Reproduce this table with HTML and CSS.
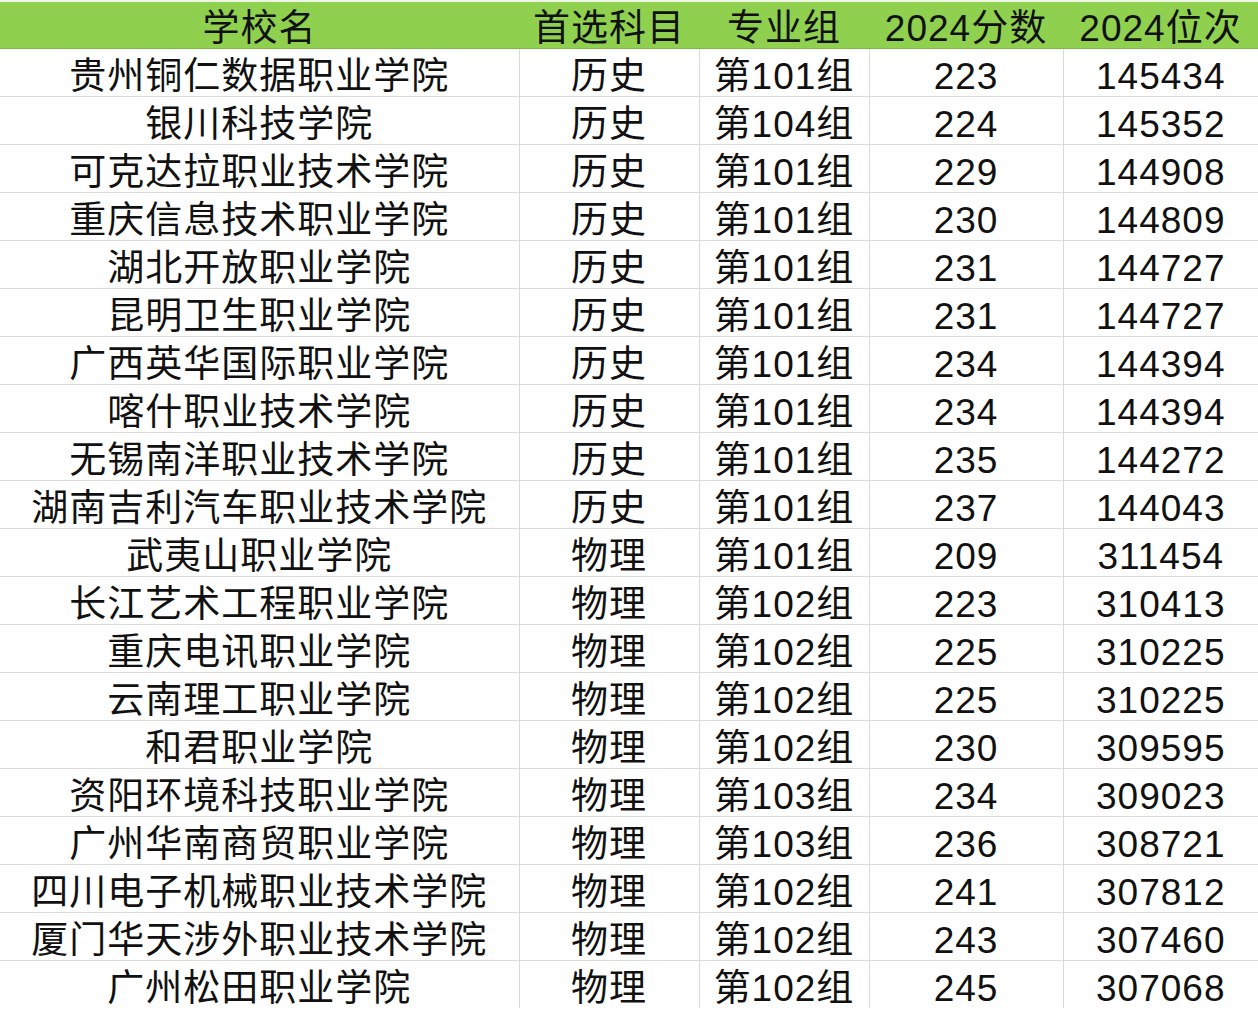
FILE: index.html
```html
<!DOCTYPE html>
<html lang="zh-CN">
<head>
<meta charset="utf-8">
<title>高职院校分数位次</title>
<link rel="stylesheet" href="styles.css">
</head>
<body>
<table class="sheet">
  <colgroup>
    <col class="c-name"><col class="c-subj"><col class="c-grp"><col class="c-score"><col class="c-rank">
  </colgroup>
  <thead>
    <tr class="head"><th>学校名</th><th>首选科目</th><th>专业组</th><th>2024分数</th><th>2024位次</th></tr>
  </thead>
  <tbody>
    <tr><td>贵州铜仁数据职业学院</td><td>历史</td><td>第101组</td><td>223</td><td>145434</td></tr>
    <tr><td>银川科技学院</td><td>历史</td><td>第104组</td><td>224</td><td>145352</td></tr>
    <tr><td>可克达拉职业技术学院</td><td>历史</td><td>第101组</td><td>229</td><td>144908</td></tr>
    <tr><td>重庆信息技术职业学院</td><td>历史</td><td>第101组</td><td>230</td><td>144809</td></tr>
    <tr><td>湖北开放职业学院</td><td>历史</td><td>第101组</td><td>231</td><td>144727</td></tr>
    <tr><td>昆明卫生职业学院</td><td>历史</td><td>第101组</td><td>231</td><td>144727</td></tr>
    <tr><td>广西英华国际职业学院</td><td>历史</td><td>第101组</td><td>234</td><td>144394</td></tr>
    <tr><td>喀什职业技术学院</td><td>历史</td><td>第101组</td><td>234</td><td>144394</td></tr>
    <tr><td>无锡南洋职业技术学院</td><td>历史</td><td>第101组</td><td>235</td><td>144272</td></tr>
    <tr><td>湖南吉利汽车职业技术学院</td><td>历史</td><td>第101组</td><td>237</td><td>144043</td></tr>
    <tr><td>武夷山职业学院</td><td>物理</td><td>第101组</td><td>209</td><td>311454</td></tr>
    <tr><td>长江艺术工程职业学院</td><td>物理</td><td>第102组</td><td>223</td><td>310413</td></tr>
    <tr><td>重庆电讯职业学院</td><td>物理</td><td>第102组</td><td>225</td><td>310225</td></tr>
    <tr><td>云南理工职业学院</td><td>物理</td><td>第102组</td><td>225</td><td>310225</td></tr>
    <tr><td>和君职业学院</td><td>物理</td><td>第102组</td><td>230</td><td>309595</td></tr>
    <tr><td>资阳环境科技职业学院</td><td>物理</td><td>第103组</td><td>234</td><td>309023</td></tr>
    <tr><td>广州华南商贸职业学院</td><td>物理</td><td>第103组</td><td>236</td><td>308721</td></tr>
    <tr><td>四川电子机械职业技术学院</td><td>物理</td><td>第102组</td><td>241</td><td>307812</td></tr>
    <tr><td>厦门华天涉外职业技术学院</td><td>物理</td><td>第102组</td><td>243</td><td>307460</td></tr>
    <tr><td>广州松田职业学院</td><td>物理</td><td>第102组</td><td>245</td><td>307068</td></tr>
  </tbody>
</table>
</body>
</html>
```

FILE: styles.css
```css
html, body {
  margin: 0;
  padding: 0;
  background: #ffffff;
}

body {
  font-family: "Liberation Sans", "Noto Sans CJK SC", sans-serif;
  color: #111111;
}

.sheet {
  width: 1258px;
  border-collapse: collapse;
  table-layout: fixed;
}

.c-name { width: 519px; }
.c-subj { width: 180px; }
.c-grp { width: 170px; }
.c-score { width: 194px; }
.c-rank { width: 195px; }

.sheet th,
.sheet td {
  padding: 0;
  text-align: center;
  vertical-align: middle;
  font-size: 37px;
  font-weight: normal;
  line-height: 1;
  letter-spacing: 1px;
  white-space: nowrap;
  overflow: hidden;
}

.head th {
  height: 47px;
  background: #8fd14f;
  border-top: 2px solid #eef6e6;
  border-bottom: 1px solid #7cb843;
  padding-top: 7px;
  box-sizing: border-box;
}

.sheet tbody td {
  height: 48px;
  border-right: 1px solid #dadada;
  border-bottom: 1px solid #dadada;
  padding-top: 8px;
  box-sizing: border-box;
}

.sheet tbody td:last-child {
  border-right: none;
}

.sheet tbody tr:last-child td {
  border-bottom: none;
}
```
